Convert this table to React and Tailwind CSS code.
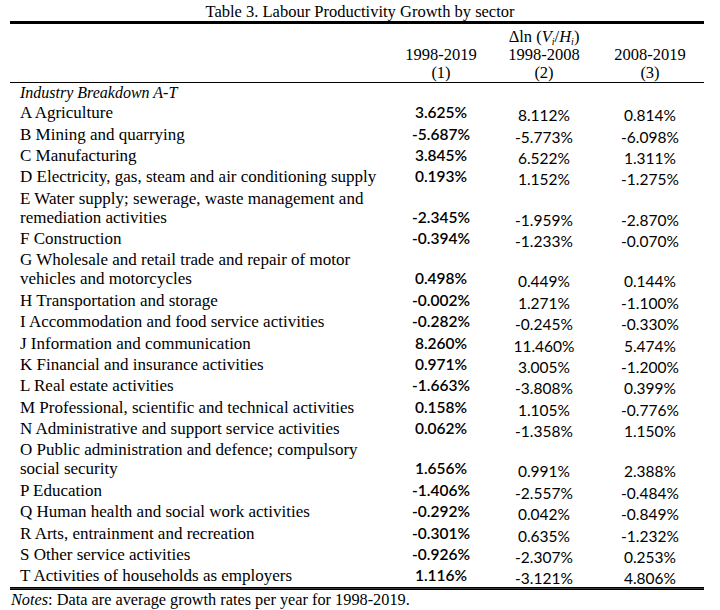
import React from 'react';

const rows = [
  { label: ['A Agriculture'], v: ['3.625%', '8.112%', '0.814%'] },
  { label: ['B Mining and quarrying'], v: ['-5.687%', '-5.773%', '-6.098%'] },
  { label: ['C Manufacturing'], v: ['3.845%', '6.522%', '1.311%'] },
  { label: ['D Electricity, gas, steam and air conditioning supply'], v: ['0.193%', '1.152%', '-1.275%'] },
  { label: ['E Water supply; sewerage, waste management and', 'remediation activities'], v: ['-2.345%', '-1.959%', '-2.870%'] },
  { label: ['F Construction'], v: ['-0.394%', '-1.233%', '-0.070%'] },
  { label: ['G Wholesale and retail trade and repair of motor', 'vehicles and motorcycles'], v: ['0.498%', '0.449%', '0.144%'] },
  { label: ['H Transportation and storage'], v: ['-0.002%', '1.271%', '-1.100%'] },
  { label: ['I Accommodation and food service activities'], v: ['-0.282%', '-0.245%', '-0.330%'] },
  { label: ['J Information and communication'], v: ['8.260%', '11.460%', '5.474%'] },
  { label: ['K Financial and insurance activities'], v: ['0.971%', '3.005%', '-1.200%'] },
  { label: ['L Real estate activities'], v: ['-1.663%', '-3.808%', '0.399%'] },
  { label: ['M Professional, scientific and technical activities'], v: ['0.158%', '1.105%', '-0.776%'] },
  { label: ['N Administrative and support service activities'], v: ['0.062%', '-1.358%', '1.150%'] },
  { label: ['O Public administration and defence; compulsory', 'social security'], v: ['1.656%', '0.991%', '2.388%'] },
  { label: ['P Education'], v: ['-1.406%', '-2.557%', '-0.484%'] },
  { label: ['Q Human health and social work activities'], v: ['-0.292%', '0.042%', '-0.849%'] },
  { label: ['R Arts, entrainment and recreation'], v: ['-0.301%', '0.635%', '-1.232%'] },
  { label: ['S Other service activities'], v: ['-0.926%', '-2.307%', '0.253%'] },
  { label: ['T Activities of households as employers'], v: ['1.116%', '-3.121%', '4.806%'] },
];

const grid = 'grid grid-cols-[380px_102px_104px_108px]';
const num = "font-['Lato',sans-serif] text-[15.5px] text-center";

function Row({ row }) {
  return (
    <div className={`${grid} items-end`}>
      <div className="pl-[10px] py-[1.2px] leading-[19px] text-[17px] whitespace-nowrap">
        {row.label.map((l) => (
          <div key={l}>{l}</div>
        ))}
      </div>
      <div className={`${num} font-semibold leading-[19px] py-[1.2px]`}>{row.v[0]}</div>
      <div className={`${num} leading-[15px] pb-[0.2px]`}>{row.v[1]}</div>
      <div className={`${num} leading-[15px] pb-[0.2px]`}>{row.v[2]}</div>
    </div>
  );
}

export default function App() {
  return (
    <div className="w-[720px] h-[610px] overflow-hidden bg-white text-black font-['Liberation_Serif',serif] text-[16px]">
      <div className="pt-[2px] text-center text-[16.5px] leading-[19px] h-[21px]">
        Table 3. Labour Productivity Growth by sector
      </div>
      <div className="w-[694px] ml-[10px]">
        <div className="h-[3px] bg-black" />

        {/* header */}
        <div className={`${grid} pt-[4px] leading-[18px] text-center text-[16.5px]`}>
          <div />
          <div>
            <div>&nbsp;</div>
            <div>1998-2019</div>
            <div>(1)</div>
          </div>
          <div>
            <div className="h-[18px]">
              Δln (<i>V</i>
              <sub className="italic text-[10px]">i</sub>/<i>H</i>
              <sub className="italic text-[10px]">i</sub>)
            </div>
            <div>1998-2008</div>
            <div>(2)</div>
          </div>
          <div>
            <div>&nbsp;</div>
            <div>2008-2019</div>
            <div>(3)</div>
          </div>
        </div>
        <div className="h-[1px] bg-black" />

        <div className="pl-[10px] italic leading-[19px] h-[19px]">Industry Breakdown A-T</div>
        {rows.map((r) => (
          <Row key={r.label[0]} row={r} />
        ))}

        <div className="h-[3px] bg-[#333] border-y border-black" />
      </div>
      <div className="pl-[11px] pt-[1px] leading-[18px] text-[16.3px]">
        <i>Notes</i>: Data are average growth rates per year for 1998-2019.
      </div>
    </div>
  );
}
